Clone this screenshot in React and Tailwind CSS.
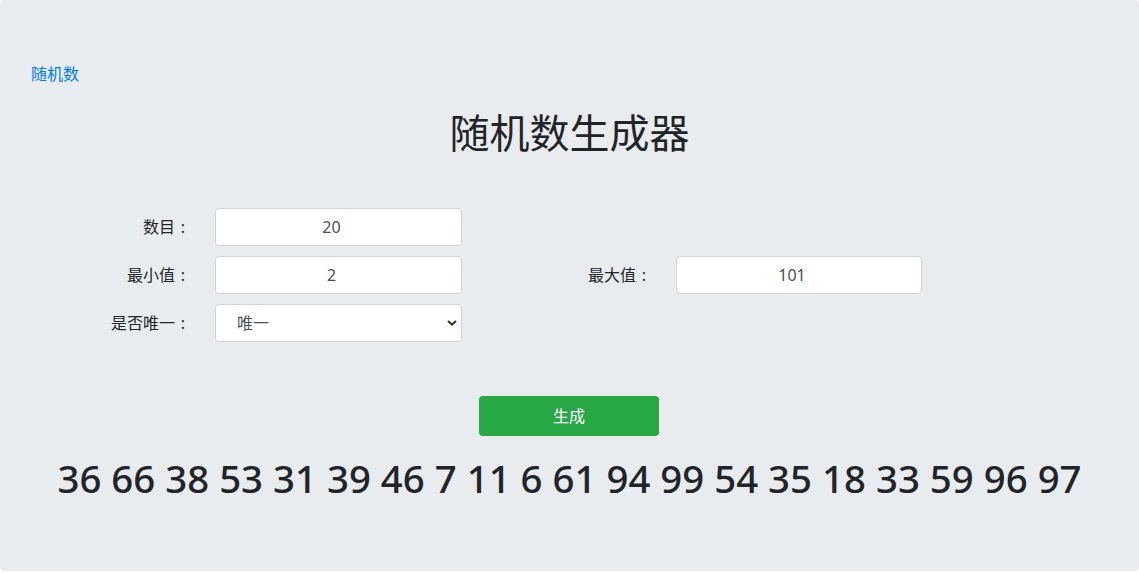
import { useState } from 'react';

const font = { fontFamily: '"Noto Sans", "Noto Sans CJK SC", sans-serif' };

const Field = ({ label, value }) => (
  <>
    <label className="text-right text-[16px] text-[#212529]">
      {label.slice(0, -1)}
      <span className="inline-block w-[16px] text-center">:</span>
    </label>
    <input
      readOnly
      value={value}
      className="h-[38px] rounded-[4px] border border-[#ced4da] bg-white pr-[14px] text-center text-[16px] text-[#495057] outline-none"
    />
  </>
);

export default function App() {
  const [unique, setUnique] = useState('1');
  const nums = [36, 66, 38, 53, 31, 39, 46, 7, 11, 6, 61, 94, 99, 54, 35, 18, 33, 59, 96, 97];

  return (
    <div style={font} className="min-h-screen bg-white">
      <div className="h-[571px] rounded-[5px] bg-[#e9ecef] pt-[62px]">
        <a href="#" className="ml-[31px] block w-fit text-[16px] leading-[24px] text-[#007bff]">随机数</a>

        <h1 className="mt-[23px] text-center text-[40px] font-normal leading-[48px] text-[#212529]">随机数生成器</h1>

        {/* form */}
        <div className="mt-[51px] flex flex-col gap-[10px]">
          <div className="grid grid-cols-[191px_247px] items-center gap-x-[24px]">
            <Field label="数目：" value="20" />
          </div>
          <div className="grid grid-cols-[191px_247px_166px_246px] items-center gap-x-[24px]">
            <Field label="最小值：" value="2" />
            <Field label="最大值：" value="101" />
          </div>
          <div className="grid grid-cols-[191px_247px] items-center gap-x-[24px]">
            <label className="text-right text-[16px] text-[#212529]">
              是否唯一<span className="inline-block w-[16px] text-center">:</span>
            </label>
            <div className="relative">
              <select
                value={unique}
                onChange={e => setUnique(e.target.value)}
                className="h-[38px] w-full appearance-none rounded-[4px] border border-[#ced4da] bg-white pl-[21px] text-[16px] text-[#495057] outline-none"
              >
                <option value="1">唯一</option>
                <option value="0">不唯一</option>
              </select>
              <svg className="pointer-events-none absolute right-[5px] top-[16px]" width="10" height="6" viewBox="0 0 10 6">
                <path d="M1 1l4 3.6L9 1" fill="none" stroke="#333" strokeWidth="2" />
              </svg>
            </div>
          </div>
        </div>

        <div className="mt-[54px] flex justify-center pr-px">
          <button className="h-[40px] w-[180px] rounded-[4px] bg-[#28a745] text-[16px] text-white">生成</button>
        </div>

        <h1 className="mt-[18px] text-center text-[38.4px] font-medium leading-[48px] text-[#212529]">
          {nums.join(' ')}
        </h1>
      </div>
    </div>
  );
}
